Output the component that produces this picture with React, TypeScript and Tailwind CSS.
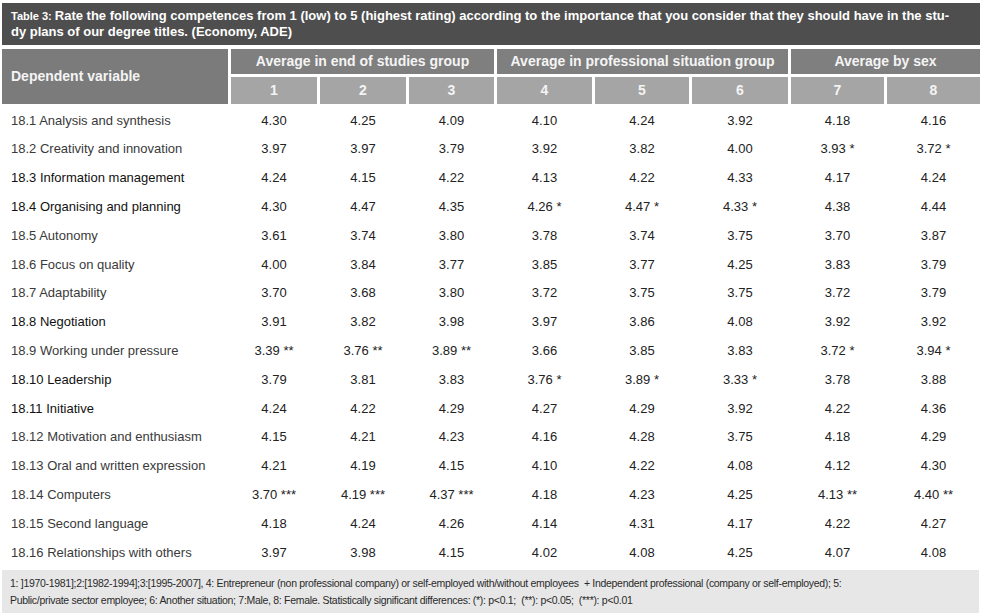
import React from 'react';

const rows: { label: string; values: string[]; dark?: boolean }[] = [
  { label: '18.1 Analysis and synthesis', values: ['4.30', '4.25', '4.09', '4.10', '4.24', '3.92', '4.18', '4.16'] },
  { label: '18.2 Creativity and innovation', values: ['3.97', '3.97', '3.79', '3.92', '3.82', '4.00', '3.93 *', '3.72 *'] },
  { label: '18.3 Information management', values: ['4.24', '4.15', '4.22', '4.13', '4.22', '4.33', '4.17', '4.24'], dark: true },
  { label: '18.4 Organising and planning', values: ['4.30', '4.47', '4.35', '4.26 *', '4.47 *', '4.33 *', '4.38', '4.44'], dark: true },
  { label: '18.5 Autonomy', values: ['3.61', '3.74', '3.80', '3.78', '3.74', '3.75', '3.70', '3.87'] },
  { label: '18.6 Focus on quality', values: ['4.00', '3.84', '3.77', '3.85', '3.77', '4.25', '3.83', '3.79'] },
  { label: '18.7 Adaptability', values: ['3.70', '3.68', '3.80', '3.72', '3.75', '3.75', '3.72', '3.79'] },
  { label: '18.8 Negotiation', values: ['3.91', '3.82', '3.98', '3.97', '3.86', '4.08', '3.92', '3.92'], dark: true },
  { label: '18.9 Working under pressure', values: ['3.39 **', '3.76 **', '3.89 **', '3.66', '3.85', '3.83', '3.72 *', '3.94 *'] },
  { label: '18.10 Leadership', values: ['3.79', '3.81', '3.83', '3.76 *', '3.89 *', '3.33 *', '3.78', '3.88'], dark: true },
  { label: '18.11 Initiative', values: ['4.24', '4.22', '4.29', '4.27', '4.29', '3.92', '4.22', '4.36'], dark: true },
  { label: '18.12 Motivation and enthusiasm', values: ['4.15', '4.21', '4.23', '4.16', '4.28', '3.75', '4.18', '4.29'] },
  { label: '18.13 Oral and written expression', values: ['4.21', '4.19', '4.15', '4.10', '4.22', '4.08', '4.12', '4.30'] },
  { label: '18.14 Computers', values: ['3.70 ***', '4.19 ***', '4.37 ***', '4.18', '4.23', '4.25', '4.13 **', '4.40 **'] },
  { label: '18.15 Second language', values: ['4.18', '4.24', '4.26', '4.14', '4.31', '4.17', '4.22', '4.27'] },
  { label: '18.16 Relationships with others', values: ['3.97', '3.98', '4.15', '4.02', '4.08', '4.25', '4.07', '4.08'] },
];

const cols = 'grid grid-cols-[226px_86px_86px_85px_95px_94px_96px_93px_93px] gap-x-[3px]';

export default function App() {
  return (
    <div className="w-[984px] h-[616px] bg-white px-[2px] pt-[3px] font-['Liberation_Sans',Arial,sans-serif]">
      <div className="w-[978px] h-[42px] bg-[#4e4e4e] px-[9px] pt-[5px] text-white font-bold text-[13px] leading-[16px] whitespace-nowrap">
        <span className="text-[11px]">Table 3: </span>
        Rate the following competences from 1 (low) to 5 (highest rating) according to the importance that you consider that they should have in the stu-
        <br />
        dy plans of our degree titles. (Economy, ADE)
      </div>

      <div className={`${cols} mt-[4px] grid-rows-[25px_27px] gap-y-[3px] text-[#f4f4f4] font-bold`}>
        <div className="row-span-2 bg-[#7b7b7b] flex items-center px-[9px] text-[14px]">Dependent variable</div>
        <div className="col-span-3 bg-[#7f7f7f] flex items-center justify-center text-[14px]">Average in end of studies group</div>
        <div className="col-span-3 bg-[#7f7f7f] flex items-center justify-center text-[14px]">Average in professional situation group</div>
        <div className="col-span-2 bg-[#7f7f7f] flex items-center justify-center text-[14px]">Average by sex</div>
        {['1', '2', '3', '4', '5', '6', '7', '8'].map((n) => (
          <div key={n} className="bg-[#a5a5a6] flex items-center justify-center text-[14px]">
            {n}
          </div>
        ))}
      </div>

      <div className="mt-[2px]">
        {rows.map((r) => (
          <div key={r.label} className={`${cols} h-[28.8px] items-center text-[13px]`}>
            <div className={`pl-[9px] ${r.dark ? 'text-[#111]' : 'text-[#3a3a3a]'}`}>{r.label}</div>
            {r.values.map((v, i) => (
              <div key={i} className="text-center text-[#222]">
                {v}
              </div>
            ))}
          </div>
        ))}
      </div>

      <div className="w-[977px] h-[43px] mt-[3px] bg-[#e7e7e7] px-[8px] pt-[5px] text-[10.5px] tracking-[-0.3px] leading-[17px] text-[#2a2a2a] whitespace-nowrap">
        1: ]1970-1981];2:[1982-1994];3:[1995-2007], 4: Entrepreneur (non professional company) or self-employed with/without employees &nbsp;+ Independent professional (company or self-employed); 5:
        <br />
        Public/private sector employee; 6: Another situation; 7:Male, 8: Female. Statistically significant differences: (*): p&lt;0.1; &nbsp;(**): p&lt;0.05; &nbsp;(***): p&lt;0.01
      </div>
    </div>
  );
}
